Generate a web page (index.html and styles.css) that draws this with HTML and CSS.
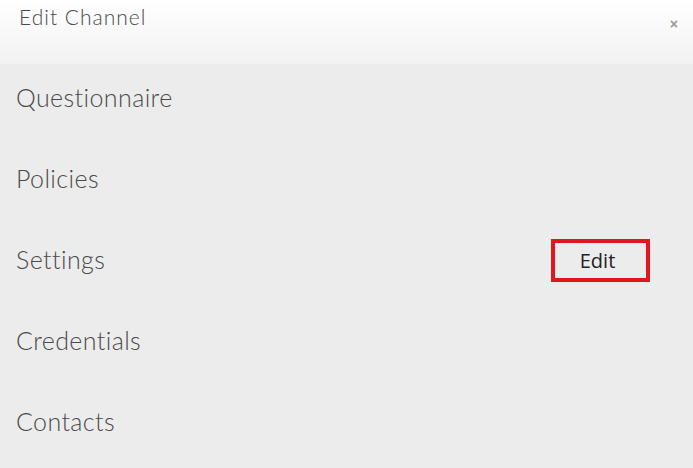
FILE: index.html
```html
<!DOCTYPE html>
<html>
<head>
<meta charset="utf-8">
<title>Edit Channel</title>
<link rel="stylesheet" href="styles.css">
</head>
<body>
<div class="modal">
  <header class="modal-header">
    <h1 class="modal-title">Edit Channel</h1>
    <span class="close">×</span>
  </header>
  <ul class="menu">
    <li class="menu-item"><span class="label">Questionnaire</span></li>
    <li class="menu-item"><span class="label">Policies</span></li>
    <li class="menu-item"><span class="label">Settings</span><button class="edit-btn">Edit</button></li>
    <li class="menu-item"><span class="label">Credentials</span></li>
    <li class="menu-item"><span class="label">Contacts</span></li>
  </ul>
</div>
</body>
</html>
```

FILE: styles.css
```css
html, body {
  margin: 0;
  padding: 0;
}
body {
  width: 693px;
  height: 468px;
  overflow: hidden;
  background: #ececec;
  font-family: "Lato", "Open Sans", sans-serif;
  color: #555;
}
.modal {
  display: flex;
  flex-direction: column;
  height: 468px;
}
.modal-header {
  flex-shrink: 0;
  height: 64px;
  box-sizing: border-box;
  background: linear-gradient(to bottom, #ffffff 0%, #f2f2f2 100%);
  display: flex;
  justify-content: space-between;
  align-items: flex-start;
  padding: 4px 15px 0 19px;
}
.modal-title {
  margin: 0;
  font-size: 21px;
  line-height: 25px;
  font-weight: 300;
  letter-spacing: 1px;
  color: #4a4a4a;
}
.close {
  font-family: "Liberation Sans", sans-serif;
  font-size: 14px;
  font-weight: bold;
  color: #999;
  margin-top: 12px;
  line-height: 16px;
}
.menu {
  list-style: none;
  margin: 0;
  padding: 18px 43px 0 16px;
}
.menu-item {
  display: flex;
  justify-content: space-between;
  align-items: center;
  height: 30px;
  margin-bottom: 51px;
  font-size: 25px;
  line-height: 30px;
  font-weight: 300;
  letter-spacing: 0.4px;
  color: #4a4a4a;
}
.edit-btn {
  width: 99px;
  height: 43px;
  box-sizing: border-box;
  border: 4px solid #e3161f;
  background: transparent;
  font-family: "Open Sans", "Noto Sans", sans-serif;
  font-size: 20px;
  letter-spacing: 0;
  color: #222;
  padding: 0 6px 0 0;
  margin: 2px 0 0 0;
}
```
